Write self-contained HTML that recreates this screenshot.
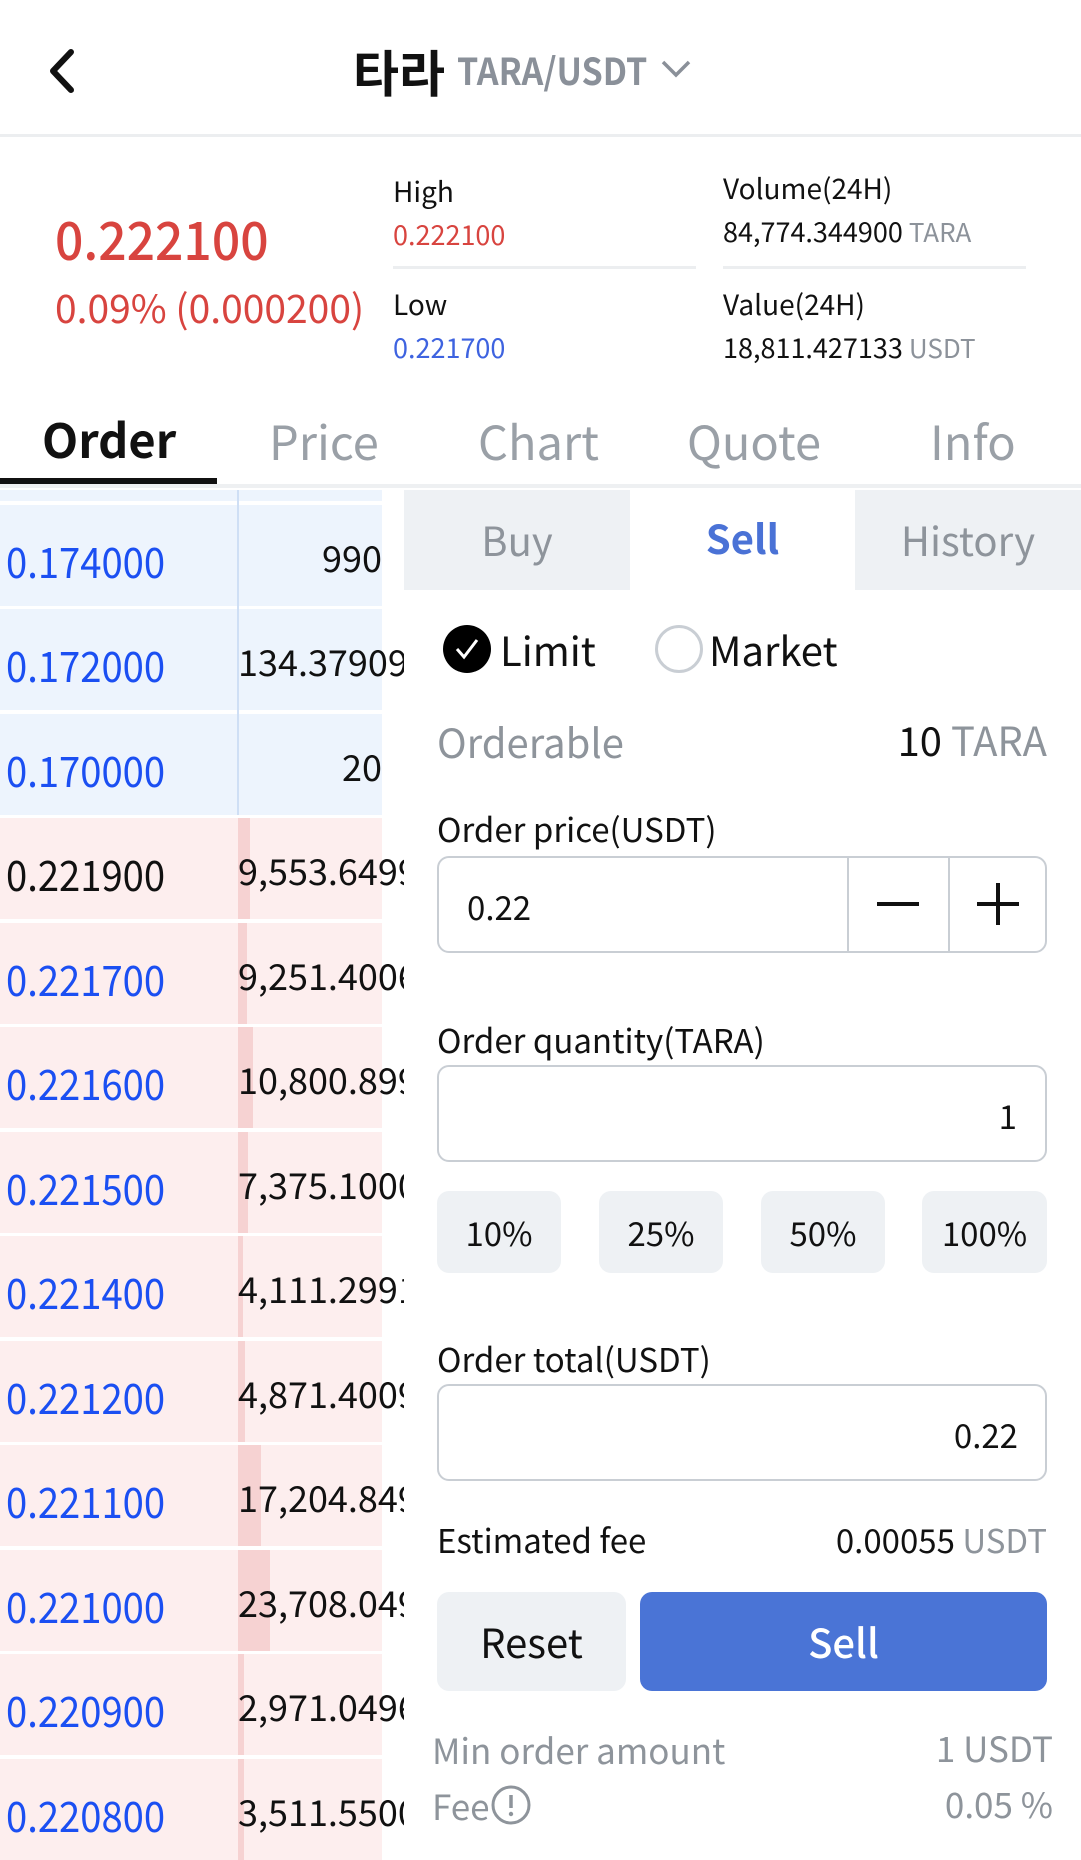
<!DOCTYPE html>
<html><head><meta charset="utf-8"><style>
*{margin:0;padding:0;box-sizing:border-box}
body{width:1081px;height:1838px;overflow:hidden;background:#fff;font-family:"Noto Sans CJK KR","Liberation Sans",sans-serif;color:#111;position:relative}
.t{position:absolute;white-space:nowrap;line-height:1}
.g{color:#8c929a}
.row{position:absolute;left:0;width:404px;height:101px;overflow:hidden}
.row .bg{position:absolute;left:0;top:0;width:382px;height:101px}
.row .bar{position:absolute;left:238px;top:0;height:101px;background:#f6d2d2}
.row .p{position:absolute;left:6px;top:34px;font-size:42px;line-height:44px;color:#1b4ff2;transform:scaleX(0.91);transform-origin:left center}
.row .q{position:absolute;left:238px;top:32px;font-size:36px;line-height:40px;color:#111}
.row .qr{position:absolute;right:22px;top:32px;font-size:36px;line-height:40px;text-align:right}
.box{position:absolute;left:437px;width:610px;border:2.5px solid #c9ced4;border-radius:12px;background:#fff}
.pct{position:absolute;top:1191px;height:82px;width:124px;background:#eef1f4;border-radius:12px;font-size:33px;line-height:82px;text-align:center}
.tab{position:absolute;top:414px;font-size:47px;line-height:52px;color:#9aa0a7;white-space:nowrap}
</style></head><body>

<!-- header -->
<svg style="position:absolute;left:44px;top:48px" width="36" height="46" viewBox="0 0 36 46"><path d="M27 4 L9 23 L27 42" fill="none" stroke="#111" stroke-width="6" stroke-linecap="round" stroke-linejoin="round"/></svg>
<div class="t" style="left:353px;top:44px;font-size:50px;font-weight:700;line-height:54px">타라</div>
<div class="t" style="left:457px;top:48px;font-size:37px;font-weight:600;line-height:42px;color:#8a9099;transform:scaleX(0.92);transform-origin:left center">TARA/USDT</div>
<svg style="position:absolute;left:660px;top:58px" width="32" height="22" viewBox="0 0 32 22"><path d="M3 4 L16 17 L29 4" fill="none" stroke="#8a9099" stroke-width="3.5"/></svg>
<div style="position:absolute;left:0;top:134px;width:1081px;height:3px;background:#eceef0"></div>

<!-- ticker -->
<div class="t" style="left:55px;top:210px;font-size:53px;font-weight:500;line-height:56px;color:#d8443f;transform:scaleX(0.94);transform-origin:left center">0.222100</div>
<div class="t" style="left:55px;top:286px;font-size:39px;line-height:42px;color:#d8443f">0.09% (0.000200)</div>
<div class="t" style="left:393px;top:175px;font-size:28px;line-height:32px">High</div>
<div class="t" style="left:393px;top:219px;font-size:27px;line-height:30px;color:#d8443f">0.222100</div>
<div style="position:absolute;left:393px;top:266px;width:303px;height:3px;background:#eceef0"></div>
<div class="t" style="left:393px;top:288px;font-size:28px;line-height:32px">Low</div>
<div class="t" style="left:393px;top:332px;font-size:27px;line-height:30px;color:#3e63e0">0.221700</div>
<div class="t" style="left:723px;top:172px;font-size:28px;line-height:32px">Volume(24H)</div>
<div class="t" style="left:723px;top:216px;font-size:27px;line-height:30px">84,774.344900 <span class="g" style="font-size:26px">TARA</span></div>
<div style="position:absolute;left:723px;top:266px;width:303px;height:3px;background:#eceef0"></div>
<div class="t" style="left:723px;top:288px;font-size:28px;line-height:32px">Value(24H)</div>
<div class="t" style="left:723px;top:332px;font-size:27px;line-height:30px">18,811.427133 <span class="g" style="font-size:26px">USDT</span></div>

<!-- tabs -->
<div class="tab" style="left:42px;font-weight:700;color:#111;top:412px">Order</div>
<div class="tab" style="left:269px">Price</div>
<div class="tab" style="left:478px">Chart</div>
<div class="tab" style="left:687px">Quote</div>
<div class="tab" style="left:930px">Info</div>
<div style="position:absolute;left:0;top:484px;width:1081px;height:4px;background:#eef0f2"></div>
<div style="position:absolute;left:0;top:478px;width:217px;height:6px;background:#111"></div>

<!-- order book -->
<div style="position:absolute;left:0;top:490px;width:382px;height:11px;background:#edf4fd"></div>
<div style="position:absolute;left:237px;top:490px;width:2px;height:325px;background:#cfdff5"></div>

<div class="row" style="top:505px"><div class="bg" style="background:#edf4fd"></div><div style="position:absolute;left:237px;top:0;width:2px;height:101px;background:#cfdff5"></div><div class="p">0.174000</div><div class="qr">990</div></div>
<div class="row" style="top:609px"><div class="bg" style="background:#edf4fd"></div><div style="position:absolute;left:237px;top:0;width:2px;height:101px;background:#cfdff5"></div><div class="p">0.172000</div><div class="q">134.379093</div></div>
<div class="row" style="top:714px"><div class="bg" style="background:#edf4fd"></div><div style="position:absolute;left:237px;top:0;width:2px;height:101px;background:#cfdff5"></div><div class="p">0.170000</div><div class="qr">20</div></div>

<div class="row" style="top:818px"><div class="bg" style="background:#fdeeee"></div><div class="bar" style="width:12px"></div><div class="p" style="color:#111">0.221900</div><div class="q">9,553.64997</div></div>
<div class="row" style="top:923px"><div class="bg" style="background:#fdeeee"></div><div class="bar" style="width:9px"></div><div class="p">0.221700</div><div class="q">9,251.40062</div></div>
<div class="row" style="top:1027px"><div class="bg" style="background:#fdeeee"></div><div class="bar" style="width:15px"></div><div class="p">0.221600</div><div class="q">10,800.8994</div></div>
<div class="row" style="top:1132px"><div class="bg" style="background:#fdeeee"></div><div class="bar" style="width:10px"></div><div class="p">0.221500</div><div class="q">7,375.10004</div></div>
<div class="row" style="top:1236px"><div class="bg" style="background:#fdeeee"></div><div class="bar" style="width:5px"></div><div class="p">0.221400</div><div class="q">4,111.29914</div></div>
<div class="row" style="top:1341px"><div class="bg" style="background:#fdeeee"></div><div class="bar" style="width:7px"></div><div class="p">0.221200</div><div class="q">4,871.40097</div></div>
<div class="row" style="top:1445px"><div class="bg" style="background:#fdeeee"></div><div class="bar" style="width:23px"></div><div class="p">0.221100</div><div class="q">17,204.8494</div></div>
<div class="row" style="top:1550px"><div class="bg" style="background:#fdeeee"></div><div class="bar" style="width:32px"></div><div class="p">0.221000</div><div class="q">23,708.0496</div></div>
<div class="row" style="top:1654px"><div class="bg" style="background:#fdeeee"></div><div class="bar" style="width:6px"></div><div class="p">0.220900</div><div class="q">2,971.04960</div></div>
<div class="row" style="top:1759px"><div class="bg" style="background:#fdeeee"></div><div class="bar" style="width:6px"></div><div class="p">0.220800</div><div class="q">3,511.55000</div></div>

<!-- right panel -->
<div style="position:absolute;left:404px;top:490px;width:226px;height:100px;background:#eef1f4"></div>
<div style="position:absolute;left:855px;top:490px;width:226px;height:100px;background:#eef1f4"></div>
<div class="t" style="left:404px;width:226px;text-align:center;top:516px;font-size:40px;line-height:46px;color:#8e949b">Buy</div>
<div class="t" style="left:630px;width:225px;text-align:center;top:514px;font-size:40px;font-weight:700;line-height:46px;color:#4a72d6">Sell</div>
<div class="t" style="left:855px;width:226px;text-align:center;top:516px;font-size:40px;line-height:46px;color:#8e949b">History</div>

<svg style="position:absolute;left:442px;top:624px" width="50" height="50" viewBox="0 0 50 50"><circle cx="25" cy="25" r="24" fill="#000"/><path d="M15 25 L22 33 L35 16" fill="none" stroke="#fff" stroke-width="3"/></svg>
<div class="t" style="left:500px;top:626px;font-size:40px;line-height:46px">Limit</div>
<svg style="position:absolute;left:654px;top:624px" width="50" height="50" viewBox="0 0 50 50"><circle cx="25" cy="25" r="22.5" fill="#fff" stroke="#c9ced4" stroke-width="3"/></svg>
<div class="t" style="left:709px;top:626px;font-size:40px;line-height:46px">Market</div>

<div class="t" style="left:437px;top:718px;font-size:40px;line-height:46px;color:#8e949b">Orderable</div>
<div class="t" style="right:34px;top:716px;font-size:40px;line-height:46px">10 <span style="color:#8e949b">TARA</span></div>

<div class="t" style="left:437px;top:808px;font-size:33px;line-height:40px">Order price(USDT)</div>
<div class="box" style="top:856px;height:97px"></div>
<div style="position:absolute;left:847px;top:858px;width:2px;height:93px;background:#c9ced4"></div>
<div style="position:absolute;left:948px;top:858px;width:2px;height:93px;background:#c9ced4"></div>
<div class="t" style="left:467px;top:886px;font-size:33px;line-height:40px">0.22</div>
<div style="position:absolute;left:877px;top:902px;width:42px;height:4px;background:#111"></div>
<div style="position:absolute;left:977px;top:902px;width:42px;height:4px;background:#111"></div>
<div style="position:absolute;left:996px;top:883px;width:4px;height:42px;background:#111"></div>

<div class="t" style="left:437px;top:1019px;font-size:33px;line-height:40px">Order quantity(TARA)</div>
<div class="box" style="top:1065px;height:97px"></div>
<div class="t" style="right:64px;top:1095px;font-size:33px;line-height:40px">1</div>

<div class="pct" style="left:437px">10%</div>
<div class="pct" style="left:599px">25%</div>
<div class="pct" style="left:761px">50%</div>
<div class="pct" style="left:922px;width:125px">100%</div>

<div class="t" style="left:437px;top:1338px;font-size:33px;line-height:40px">Order total(USDT)</div>
<div class="box" style="top:1384px;height:97px"></div>
<div class="t" style="right:63px;top:1414px;font-size:33px;line-height:40px">0.22</div>

<div class="t" style="left:437px;top:1519px;font-size:33px;line-height:40px">Estimated fee</div>
<div class="t" style="right:34px;top:1519px;font-size:33px;line-height:40px">0.00055 <span style="color:#8e949b">USDT</span></div>

<div style="position:absolute;left:437px;top:1592px;width:189px;height:99px;background:#eef1f4;border-radius:12px;font-size:40px;line-height:99px;text-align:center">Reset</div>
<div style="position:absolute;left:640px;top:1592px;width:407px;height:99px;background:#4a74d6;border-radius:12px;font-size:40px;line-height:99px;text-align:center;color:#fff;font-weight:500">Sell</div>

<div class="t" style="left:432px;top:1730px;font-size:35px;line-height:40px;color:#8e949b">Min order amount</div>
<div class="t" style="right:28px;top:1728px;font-size:35px;line-height:40px;color:#8e949b">1 USDT</div>
<div class="t" style="left:432px;top:1786px;font-size:35px;line-height:40px;color:#8e949b">Fee</div>
<svg style="position:absolute;left:490px;top:1784px" width="42" height="42" viewBox="0 0 42 42"><circle cx="21" cy="21" r="18" fill="none" stroke="#8e949b" stroke-width="3"/><path d="M21 11 V24" stroke="#8e949b" stroke-width="3.5"/><circle cx="21" cy="30" r="2.2" fill="#8e949b"/></svg>
<div class="t" style="right:28px;top:1784px;font-size:35px;line-height:40px;color:#8e949b">0.05 %</div>

</body></html>
